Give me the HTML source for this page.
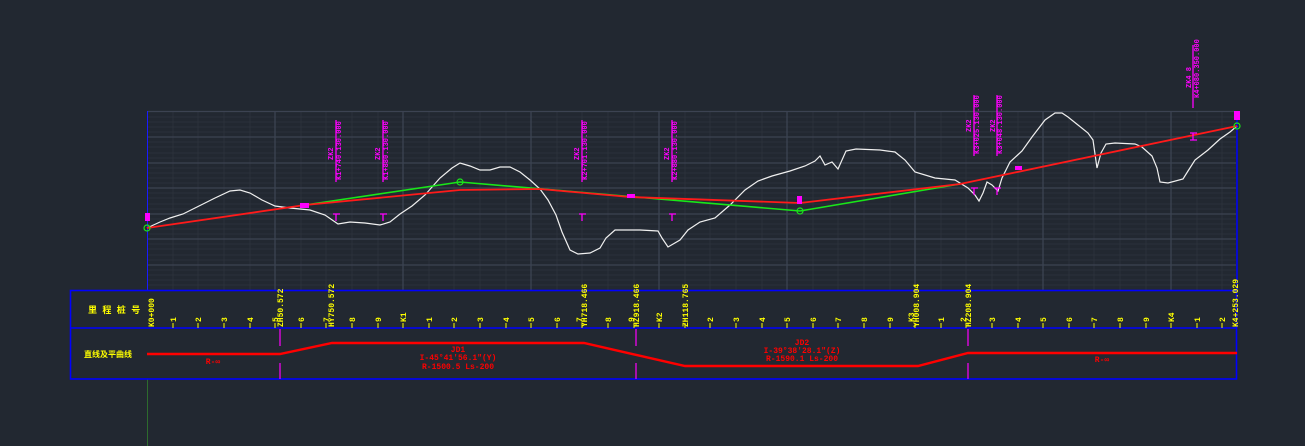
<!DOCTYPE html>
<html><head><meta charset="utf-8"><style>
html,body{margin:0;padding:0;background:#222831;width:1305px;height:446px;overflow:hidden}
svg{display:block}
text{font-family:"Liberation Mono","Noto Sans CJK SC",monospace;font-weight:bold}
</style></head><body>
<svg width="1305" height="446" viewBox="0 0 1305 446" xmlns="http://www.w3.org/2000/svg">
<rect width="1305" height="446" fill="#222831"/>
<g stroke="#2b313b" stroke-width="1">
<path d="M173 111V290M198 111V290M224 111V290M250 111V290M301 111V290M326 111V290M352 111V290M378 111V290M429 111V290M454 111V290M480 111V290M506 111V290M557 111V290M582 111V290M608 111V290M634 111V290M685 111V290M710 111V290M736 111V290M762 111V290M813 111V290M838 111V290M864 111V290M890 111V290M941 111V290M966 111V290M992 111V290M1018 111V290M1069 111V290M1094 111V290M1120 111V290M1146 111V290M1197 111V290M1222 111V290"/>
<path d="M147 117H1236M147 122H1236M147 127H1236M147 132H1236M147 142H1236M147 147H1236M147 153H1236M147 158H1236M147 168H1236M147 173H1236M147 178H1236M147 183H1236M147 193H1236M147 198H1236M147 204H1236M147 209H1236M147 219H1236M147 224H1236M147 229H1236M147 234H1236M147 244H1236M147 249H1236M147 255H1236M147 260H1236M147 270H1236M147 275H1236M147 280H1236M147 285H1236"/>
</g>
<g stroke="#3c4352" stroke-width="1.3">
<path d="M275 111V290M403 111V290M531 111V290M659 111V290M787 111V290M915 111V290M1043 111V290M1171 111V290"/>
<path d="M147 111.5H1236M147 137H1236M147 163H1236M147 188H1236M147 214H1236M147 239H1236M147 265H1236"/>
</g>
<line x1="147.5" y1="379" x2="147.5" y2="446" stroke="#2d6b2d"/>
<line x1="147.5" y1="111" x2="147.5" y2="290" stroke="#1a1aff" stroke-width="1"/>
<line x1="1237" y1="111" x2="1237" y2="290" stroke="#0000ff" stroke-width="1.5"/>
<polyline fill="none" stroke="#f0f0f0" stroke-width="1.2" points="147,228 160,222 170,218 183,214 195,208 215,198 230,191 240,190 250,193 262,200 275,206 290,208 310,210 325,215 338,224 350,222 365,223 380,225 390,222 400,214 412,206 425,195 440,178 452,168 460,163 470,166 480,170 490,170 500,167 510,167 520,172 530,180 540,189 548,200 556,215 562,232 570,250 578,254 590,253 600,248 606,238 615,230 640,230 658,231 662,238 668,247 680,240 688,230 700,222 715,218 730,205 745,190 758,181 772,176 790,171 805,166 815,161 820,156 825,165 832,162 838,169 846,151 856,149 880,150 895,152 905,160 915,172 935,178 955,180 968,188 975,195 979,201 983,193 987,182 992,185 998,191 1002,178 1010,162 1022,151 1032,137 1045,120 1055,113 1062,113 1068,117 1078,125 1088,133 1093,140 1097,168 1101,153 1106,144 1115,143 1135,144 1142,147 1152,156 1157,168 1160,182 1168,183 1183,179 1188,171 1195,160 1208,150 1220,139 1230,132 1237,126"/>
<polyline fill="none" stroke="#19e619" stroke-width="1.6" points="305,205 460,182 800,211 960,184"/>
<polyline fill="none" stroke="#ff1a1a" stroke-width="1.8" points="147,228 305,205 460,190 540,189 630,197 800,203 960,184 1237,126"/>
<g fill="none" stroke="#19e619" stroke-width="1.2"><circle cx="147" cy="228" r="3"/><circle cx="460" cy="182" r="3"/><circle cx="800" cy="211" r="3"/><circle cx="1237" cy="126" r="3"/></g>
<g stroke="#ff00ff" stroke-width="1.3" fill="none">
<path d="M336 120V182M383 120V182M582 120V182M672 120V182M974 95V156M997 95V156M1193 45V108"/>
<path d="M333 214H340M336 214V221M380 214H387M383 214V221M579 214H586M582 214V221M669 214H676M672 214V221M971 188H978M974 188V195M994 188H1001M997 188V195M1190 133H1197M1193 133V140M1190 140H1197"/>
</g>
<g fill="#ff00ff">
<rect x="145" y="213" width="5" height="8"/><rect x="300" y="203" width="9" height="5"/><rect x="797" y="196" width="5" height="8"/><rect x="627" y="194" width="8" height="4"/><rect x="1015" y="166" width="7" height="4"/><rect x="1234" y="111" width="6" height="9"/>
</g>
<g fill="#ff00ff" font-size="7">
<text transform="translate(341,180) rotate(-90)">K1+740.130.000</text>
<text transform="translate(333,160) rotate(-90)">ZK2</text>
<text transform="translate(388,180) rotate(-90)">K1+880.130.000</text>
<text transform="translate(380,160) rotate(-90)">ZK2</text>
<text transform="translate(587,180) rotate(-90)">K2+701.130.000</text>
<text transform="translate(579,160) rotate(-90)">ZK2</text>
<text transform="translate(677,180) rotate(-90)">K2+880.130.000</text>
<text transform="translate(669,160) rotate(-90)">ZK2</text>
<text transform="translate(979,154) rotate(-90)">K3+025.130.000</text>
<text transform="translate(971,132) rotate(-90)">ZK2</text>
<text transform="translate(1002,154) rotate(-90)">K3+048.130.000</text>
<text transform="translate(995,132) rotate(-90)">ZK2</text>
<text transform="translate(1199,98) rotate(-90)">K4+080.350.000</text>
<text transform="translate(1191,88) rotate(-90)">ZK4 8</text>
</g>
<g stroke="#0000ff" fill="none" stroke-width="1.6">
<rect x="70.5" y="290.5" width="1166" height="88.5"/>
<path d="M70 328H1237"/>
</g>
<g stroke="#ffff00" stroke-width="1">
<path d="M173 323V328M198 323V328M224 323V328M250 323V328M275 323V328M301 323V328M326 323V328M352 323V328M378 323V328M403 323V328M429 323V328M454 323V328M480 323V328M506 323V328M531 323V328M557 323V328M582 323V328M608 323V328M634 323V328M659 323V328M685 323V328M710 323V328M736 323V328M762 323V328M787 323V328M813 323V328M838 323V328M864 323V328M890 323V328M915 323V328M941 323V328M966 323V328M992 323V328M1018 323V328M1043 323V328M1069 323V328M1094 323V328M1120 323V328M1146 323V328M1171 323V328M1197 323V328M1222 323V328"/>
</g>
<g fill="#ffff00" font-size="9">
<text x="88" y="313" font-size="9">里 程 桩 号</text>
<text x="84" y="357" font-size="8">直线及平曲线</text>
<g font-size="8">
<text transform="translate(154,327) rotate(-90)">K0+000</text>
<text transform="translate(176,322) rotate(-90)">1</text>
<text transform="translate(201,322) rotate(-90)">2</text>
<text transform="translate(227,322) rotate(-90)">3</text>
<text transform="translate(253,322) rotate(-90)">4</text>
<text transform="translate(278,322) rotate(-90)">5</text>
<text transform="translate(283,327) rotate(-90)">ZH50.572</text>
<text transform="translate(304,322) rotate(-90)">6</text>
<text transform="translate(329,322) rotate(-90)">7</text>
<text transform="translate(334,327) rotate(-90)">HY750.572</text>
<text transform="translate(355,322) rotate(-90)">8</text>
<text transform="translate(381,322) rotate(-90)">9</text>
<text transform="translate(406,322) rotate(-90)">K1</text>
<text transform="translate(432,322) rotate(-90)">1</text>
<text transform="translate(457,322) rotate(-90)">2</text>
<text transform="translate(483,322) rotate(-90)">3</text>
<text transform="translate(509,322) rotate(-90)">4</text>
<text transform="translate(534,322) rotate(-90)">5</text>
<text transform="translate(560,322) rotate(-90)">6</text>
<text transform="translate(582,322) rotate(-90)">7</text>
<text transform="translate(587,327) rotate(-90)">YH718.466</text>
<text transform="translate(611,322) rotate(-90)">8</text>
<text transform="translate(634,322) rotate(-90)">9</text>
<text transform="translate(639,327) rotate(-90)">HZ918.466</text>
<text transform="translate(662,322) rotate(-90)">K2</text>
<text transform="translate(688,327) rotate(-90)">ZH118.765</text>
<text transform="translate(713,322) rotate(-90)">2</text>
<text transform="translate(739,322) rotate(-90)">3</text>
<text transform="translate(765,322) rotate(-90)">4</text>
<text transform="translate(790,322) rotate(-90)">5</text>
<text transform="translate(816,322) rotate(-90)">6</text>
<text transform="translate(841,322) rotate(-90)">7</text>
<text transform="translate(867,322) rotate(-90)">8</text>
<text transform="translate(893,322) rotate(-90)">9</text>
<text transform="translate(914,322) rotate(-90)">K3</text>
<text transform="translate(919,327) rotate(-90)">YH008.904</text>
<text transform="translate(944,322) rotate(-90)">1</text>
<text transform="translate(966,322) rotate(-90)">2</text>
<text transform="translate(971,327) rotate(-90)">HZ208.904</text>
<text transform="translate(995,322) rotate(-90)">3</text>
<text transform="translate(1021,322) rotate(-90)">4</text>
<text transform="translate(1046,322) rotate(-90)">5</text>
<text transform="translate(1072,322) rotate(-90)">6</text>
<text transform="translate(1097,322) rotate(-90)">7</text>
<text transform="translate(1123,322) rotate(-90)">8</text>
<text transform="translate(1149,322) rotate(-90)">9</text>
<text transform="translate(1174,322) rotate(-90)">K4</text>
<text transform="translate(1200,322) rotate(-90)">1</text>
<text transform="translate(1225,322) rotate(-90)">2</text>
<text transform="translate(1238,327) rotate(-90)">K4+253.029</text>
</g>
</g>
<g stroke="#ff00ff" stroke-width="1.2">
<path d="M280 329V346M280 363V379M636 329V346M636 363V379M968 329V346M968 363V379"/>
</g>
<polyline fill="none" stroke="#ff0000" stroke-width="2.4" points="147,354 280,354 332,343 584,343 685,366 918,366 968,353 1237,353"/>
<g fill="#ff0000" font-size="8" text-anchor="middle">
<text x="213" y="364">R-∞</text>
<text x="458" y="352">JD1</text>
<text x="458" y="360">I-45°41'56.1"(Y)</text>
<text x="458" y="369">R-1500.5 Ls-200</text>
<text x="802" y="345">JD2</text>
<text x="802" y="353">I-39°38'28.1"(Z)</text>
<text x="802" y="361">R-1590.1 Ls-200</text>
<text x="1102" y="362">R-∞</text>
</g>
</svg>
</body></html>
